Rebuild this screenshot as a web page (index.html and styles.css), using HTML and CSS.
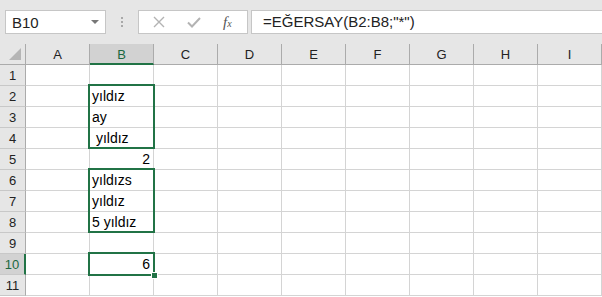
FILE: index.html
```html
<!DOCTYPE html>
<html lang="tr">
<head>
  <meta charset="UTF-8">
  <title>EĞERSAY</title>
  <link rel="stylesheet" href="styles.css">
</head>
<body>

  <div class="toolbar">
    <div class="name-box">
      <span>B10</span>
      <span class="arrow"></span>
    </div>
    <div class="grip"><i></i><i></i><i></i></div>
    <div class="fx-buttons">
      <svg width="14" height="14" viewBox="0 0 14 14"><path d="M2 2 L12 12 M12 2 L2 12" stroke="#b3b3b3" stroke-width="1.4" fill="none"/></svg>
      <svg width="14" height="14" viewBox="0 0 14 14"><path d="M1 7.5 L5 11.5 L13 3" stroke="#b3b3b3" stroke-width="2" fill="none"/></svg>
      <span class="fx">f<sub>x</sub></span>
    </div>
    <div class="formula">=EĞERSAY(B2:B8;"*")</div>
  </div>

  <div class="sheet" id="sheet">
    <div class="corner"><span></span></div>
    <div class="col-head">A</div>
    <div class="col-head active">B</div>
    <div class="col-head">C</div>
    <div class="col-head">D</div>
    <div class="col-head">E</div>
    <div class="col-head">F</div>
    <div class="col-head">G</div>
    <div class="col-head">H</div>
    <div class="col-head">I</div>

    <div class="sel" style="top: 40px; height: 65px;"></div>
    <div class="sel" style="top: 124px; height: 65px;"></div>
    <div class="sel current" style="top: 208px; height: 24px;"><span class="handle"></span></div>
  </div>

  <script>
    const values = {
      2: "yıldız",
      3: "ay",
      4: "\u00a0yıldız",
      5: 2,
      6: "yıldızs",
      7: "yıldız",
      8: "5 yıldız",
      10: 6
    };

    const sheet = document.getElementById("sheet");
    const firstSel = sheet.querySelector(".sel");

    for (let r = 1; r <= 11; r++) {
      const head = document.createElement("div");
      head.className = r === 10 ? "row-head active" : "row-head";
      head.textContent = r;
      sheet.insertBefore(head, firstSel);

      for (let c = 0; c < 9; c++) {
        const cell = document.createElement("div");
        cell.className = "cell";
        if (c === 1 && values[r] !== undefined) {
          const v = values[r];
          if (typeof v === "number") cell.classList.add("num");
          cell.textContent = v;
        }
        sheet.insertBefore(cell, firstSel);
      }
    }
  </script>

</body>
</html>
```

FILE: styles.css
```css
body {
  margin: 0;
  background: #fff;
  font-family: "Liberation Sans", Arial, sans-serif;
  overflow: hidden;
}

.toolbar {
  height: 44px;
  background: #e6e6e6;
  display: flex;
  align-items: flex-start;
  padding: 10px 0 0 5px;
  box-sizing: border-box;
}

.name-box {
  width: 101px;
  height: 24px;
  box-sizing: border-box;
  background: #fff;
  border: 1px solid #c6c6c6;
  display: flex;
  align-items: center;
  justify-content: space-between;
  padding: 0 6px 0 6px;
  font-size: 15px;
  color: #222;
}

.name-box .arrow {
  width: 0;
  height: 0;
  border-left: 4px solid transparent;
  border-right: 4px solid transparent;
  border-top: 4px solid #777;
}

.grip {
  width: 32px;
  height: 24px;
  display: flex;
  flex-direction: column;
  align-items: center;
  justify-content: center;
  gap: 2px;
}

.grip i {
  width: 2px;
  height: 2px;
  background: #a8a8a8;
}

.fx-buttons {
  width: 110px;
  height: 24px;
  box-sizing: border-box;
  background: #fff;
  border: 1px solid #c6c6c6;
  display: flex;
  align-items: center;
  gap: 21px;
  padding-left: 13px;
}

.fx {
  font-family: "Liberation Serif", "Times New Roman", serif;
  font-style: italic;
  font-size: 15px;
  color: #555;
  margin-left: 1px;
}

.fx sub {
  font-size: 10px;
  vertical-align: 0;
}

.formula {
  flex: 1;
  height: 24px;
  margin-left: 3px;
  box-sizing: border-box;
  background: #fff;
  border: 1px solid #c6c6c6;
  border-right: none;
  padding: 2px 0 0 11px;
  font-size: 15px;
  color: #222;
}

.sheet {
  position: relative;
  display: grid;
  grid-template-columns: 26px repeat(9, 64px);
  grid-template-rows: 21px repeat(11, 21px);
}

.sheet > div {
  box-sizing: border-box;
}

.corner {
  background: #e6e6e6;
  border-right: 1px solid #ababab;
  border-bottom: 1px solid #ababab;
  position: relative;
}

.corner span {
  position: absolute;
  right: 4px;
  bottom: 4px;
  width: 0;
  height: 0;
  border-left: 12px solid transparent;
  border-bottom: 12px solid #b5b5b5;
}

.col-head {
  background: #e6e6e6;
  border-right: 1px solid #ababab;
  border-bottom: 1px solid #ababab;
  text-align: center;
  font-size: 13px;
  line-height: 21px;
  color: #222;
}

.col-head.active {
  background: #d2d2d2;
  color: #1b6840;
  border-bottom: 2px solid #217346;
}

.row-head {
  background: #e6e6e6;
  border-right: 1px solid #ababab;
  border-bottom: 1px solid #c8c8c8;
  text-align: center;
  font-size: 13px;
  line-height: 21px;
  color: #222;
}

.row-head.active {
  background: #d2d2d2;
  color: #1b6840;
  border-right: 2px solid #217346;
}

.cell {
  border-right: 1px solid #d4d4d4;
  border-bottom: 1px solid #d4d4d4;
  font-size: 14px;
  line-height: 21px;
  padding: 0 3px 0 2px;
  color: #000;
  white-space: pre;
}

.cell.num {
  text-align: right;
}

.sel {
  position: absolute;
  left: 88px;
  width: 67px;
  border: 2px solid #217346;
  pointer-events: none;
}

.handle {
  position: absolute;
  right: -5px;
  bottom: -5px;
  width: 5px;
  height: 5px;
  background: #217346;
  border: 1px solid #fff;
}
```
